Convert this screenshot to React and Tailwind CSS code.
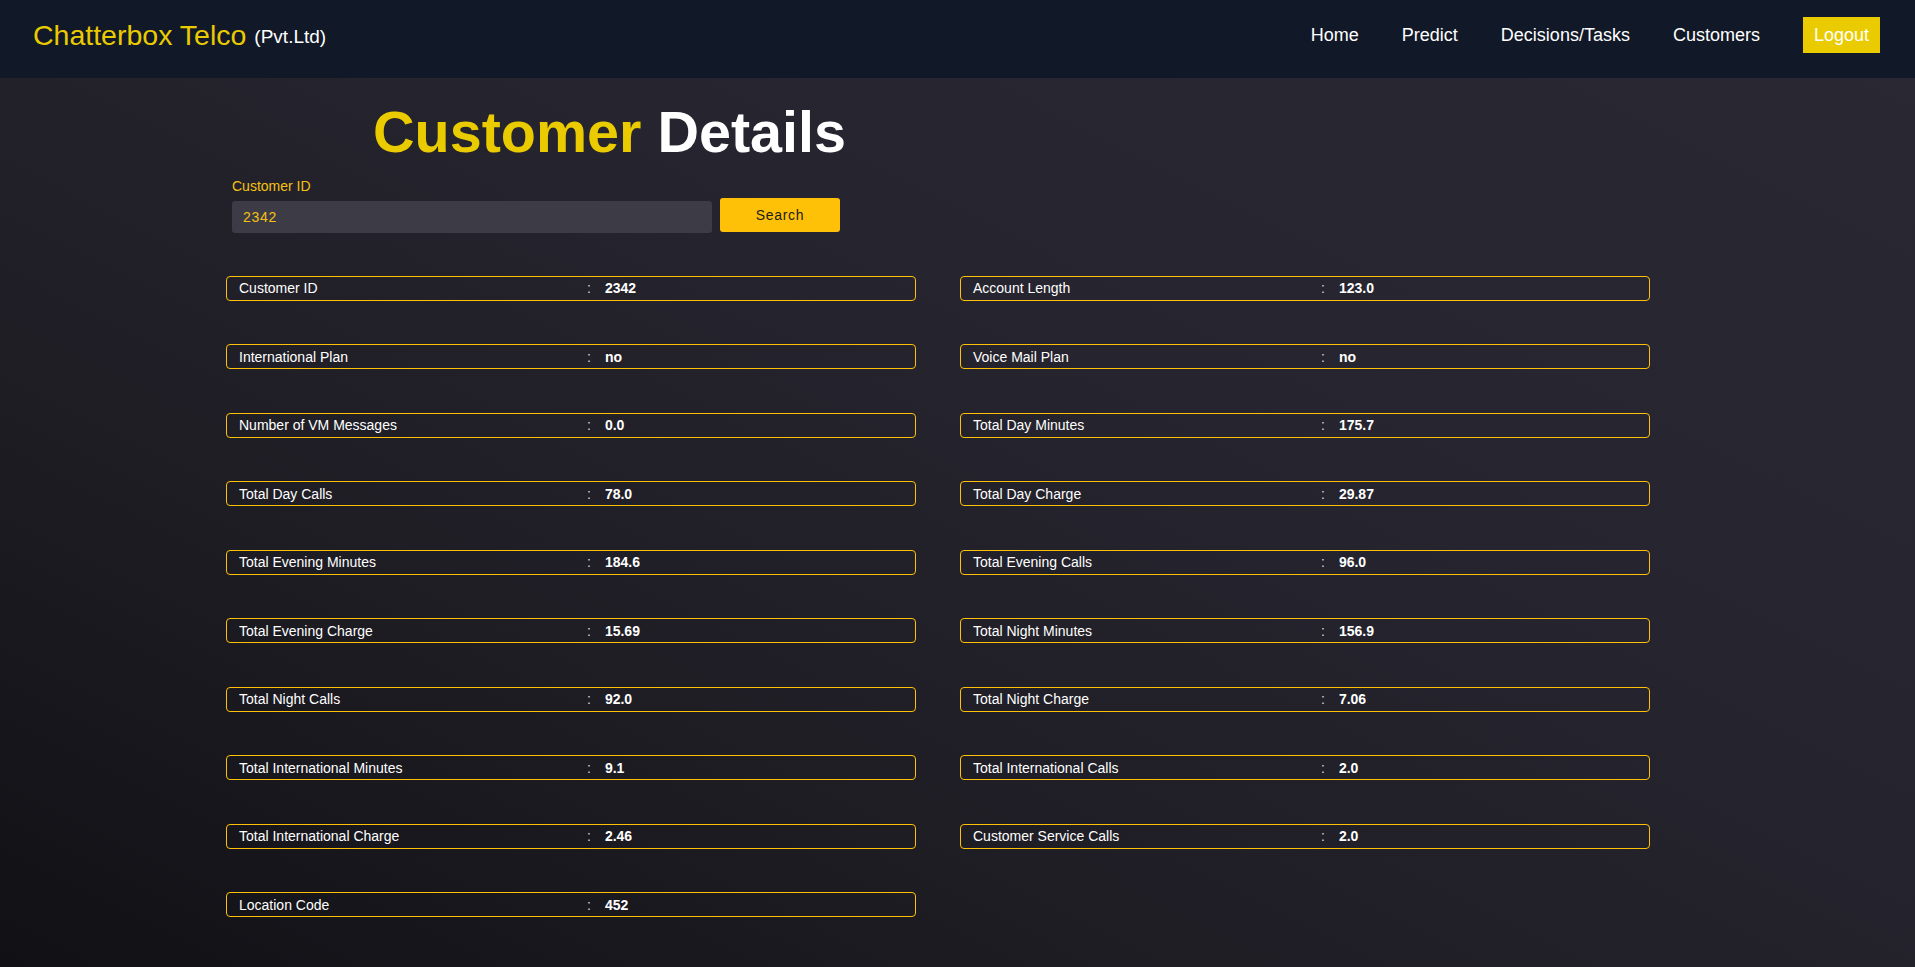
import React from "react";

const left = [
  ["Customer ID", "2342"],
  ["International Plan", "no"],
  ["Number of VM Messages", "0.0"],
  ["Total Day Calls", "78.0"],
  ["Total Evening Minutes", "184.6"],
  ["Total Evening Charge", "15.69"],
  ["Total Night Calls", "92.0"],
  ["Total International Minutes", "9.1"],
  ["Total International Charge", "2.46"],
  ["Location Code", "452"],
];
const right = [
  ["Account Length", "123.0"],
  ["Voice Mail Plan", "no"],
  ["Total Day Minutes", "175.7"],
  ["Total Day Charge", "29.87"],
  ["Total Evening Calls", "96.0"],
  ["Total Night Minutes", "156.9"],
  ["Total Night Charge", "7.06"],
  ["Total International Calls", "2.0"],
  ["Customer Service Calls", "2.0"],
];

const items = [];
for (let i = 0; i < left.length; i++) {
  items.push(left[i]);
  if (right[i]) items.push(right[i]);
}

function Row({ label, value }) {
  return (
    <div className="flex h-[25px] items-center rounded-[4px] border border-[#ffc107] pl-3 text-sm text-white">
      <span className="w-[348px] shrink-0">{label}</span>
      <span className="text-[#d9d9d9]">:</span>
      <span className="ml-[14px] font-bold">{value}</span>
    </div>
  );
}

export default function App() {
  return (
    <div
      className="min-h-screen bg-[linear-gradient(to_top_right,#111015_0%,#1e1d24_30%,#26242e_60%,#2a2832_100%)]"
      style={{ fontFamily: '"Liberation Sans", Arial, sans-serif' }}
    >
      <header className="flex h-[78px] items-start justify-between bg-[#111827] pl-[33px] pr-[35px] pt-[17px]">
        <div className="flex h-[36px] items-center">
          <span className="text-[28.5px] leading-[1.15] text-[#eacb00]">Chatterbox Telco</span>
          <span className="ml-[8px] mt-[5px] text-[19px] text-white">(Pvt.Ltd)</span>
        </div>
        <nav className="flex h-[36px] items-center gap-[43px] text-lg text-white">
          <a className="-mt-[1px] leading-7">Home</a>
          <a className="-mt-[1px] leading-7">Predict</a>
          <a className="-mt-[1px] leading-7">Decisions/Tasks</a>
          <a className="-mt-[1px] leading-7">Customers</a>
          <button className="h-[36px] bg-[#eacb00] px-[11px] text-lg leading-7 text-white">Logout</button>
        </nav>
      </header>

      <main className="pl-[226px] pt-[22px] pb-[51px]">
        <h1 className="ml-[147px] text-[57.5px] font-bold leading-[1.14]">
          <span className="text-[#eacb00]">Customer</span>{" "}
          <span className="text-white">Details</span>
        </h1>

        <div className="ml-[6px] mt-3">
          <div className="text-sm leading-4 text-[#f5c211]">Customer ID</div>
          <div className="mt-[4px] flex items-start">
            <input
              readOnly
              value="2342"
              className="mt-[3px] h-8 w-[480px] rounded-[3px] bg-[#3d3b46] pl-[11px] text-sm tracking-wider text-[#f5c211] outline-none"
            />
            <button className="ml-2 h-[34px] w-[120px] rounded-[3px] bg-[#ffc107] text-sm tracking-wider text-[#1c1c1c]">
              Search
            </button>
          </div>
        </div>

        <div className="mt-[43px] grid w-[1424px] grid-cols-2 gap-x-[44px] gap-y-[43.5px]">
          {items.map(([l, v]) => (
            <Row key={l} label={l} value={v} />
          ))}
        </div>
      </main>
    </div>
  );
}
